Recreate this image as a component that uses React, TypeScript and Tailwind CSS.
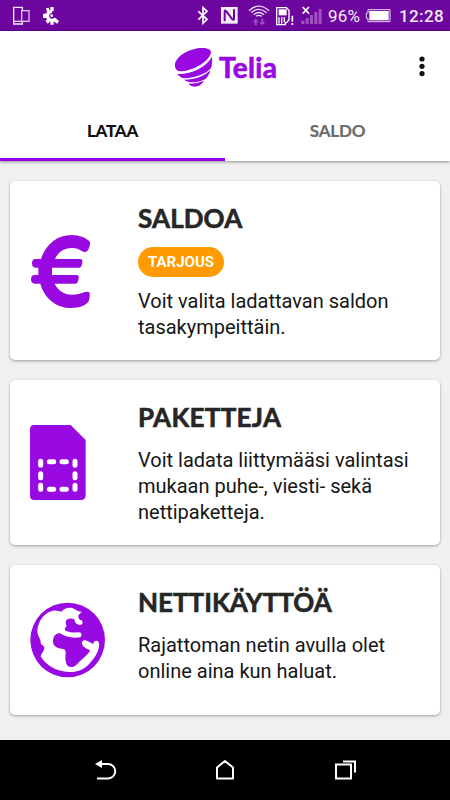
import type { ReactNode } from 'react'

interface OfferCard {
  title: string
  badge?: string
  lines: string[]
  icon: ReactNode
  heightClass: string
  titleClass: string
}

function EuroIcon() {
  return (
    <svg width="100" height="100" viewBox="0 0 300 300" fill="#990ae3">
      <path d="M210 63C200 51 179 42 154 42C111 42 76 72 63 114H46C39 114 36 120 36 127C36 136 40 140 46 140H55V162H43C36 162 33 168 33 175C33 184 37 188 44 188H61C73 231 107 261 154 261C178 261 198 254 206 241C209 233 210 224 209 217C207 211 200 212 192 214C181 218 171 221 156 221C132 221 114 208 104 188H166C173 188 175 181 176 172C177 165 175 162 170 162H96V140H178C184 140 186 133 187 124C188 117 186 114 181 114H105C115 93 132 81 156 81C171 81 181 87 190 92C198 95 203 91 207 81C209 75 211 68 210 63Z" />
    </svg>
  )
}

function SimIcon() {
  return (
    <svg className="mt-[5px]" width="100" height="100" viewBox="0 0 300 300">
      <path d="M42 30H152L197 75V241Q197 255 183 255H43Q30 255 30 242V43Q30 30 42 30Z" fill="#990ae3" />
      <g stroke="#fff" strokeWidth="15" strokeLinecap="round">
        <path d="M62 139V151M62 176V188M62 211V223M165 139V151M165 176V188M165 211V223" />
        <path d="M88 140H101M126 140H139M88 223H101M126 223H139" />
      </g>
    </svg>
  )
}

function GlobeIcon() {
  return (
    <svg width="100" height="100" viewBox="0 0 300 300">
      <circle cx="143" cy="150" r="112" fill="#990ae3" />
      <path
        d="M52 125C52 91 78 64 99 62C111 61 116 64 124 65C132 55 145 51 157 54C166 58 174 66 186 65C181 70 177 72 175 77C175 85 178 90 185 91C190 96 188 105 180 105C168 104 164 96 163 88C157 85 149 84 142 88C134 93 138 102 140 109C134 114 133 118 137 122C147 125 156 129 173 127C185 125 188 136 181 142C168 145 151 143 139 139C130 137 127 132 119 130C106 129 99 142 99 154C99 170 113 176 130 177C140 180 137 192 136 204C137 217 139 229 151 231C166 232 171 222 181 212C194 203 203 193 211 181C203 177 188 172 186 161C184 153 191 149 197 151L220 162C220 152 235 148 237 160C240 178 226 204 208 221C193 239 171 246 147 246C108 245 78 226 62 199C65 189 74 182 73 172C70 165 63 165 62 158C63 146 53 140 52 125Z"
        fill="#fff"
      />
    </svg>
  )
}

const cards: OfferCard[] = [
  {
    title: 'SALDOA',
    badge: 'TARJOUS',
    lines: ['Voit valita ladattavan saldon', 'tasakympeittäin.'],
    icon: <EuroIcon />,
    heightClass: 'h-[179px]',
    titleClass: 'tracking-[0.1px]',
  },
  {
    title: 'PAKETTEJA',
    lines: ['Voit ladata liittymääsi valintasi', 'mukaan puhe-, viesti- sekä', 'nettipaketteja.'],
    icon: <SimIcon />,
    heightClass: 'h-[165px]',
    titleClass: 'tracking-[0.3px]',
  },
  {
    title: 'NETTIKÄYTTÖÄ',
    lines: ['Rajattoman netin avulla olet', 'online aina kun haluat.'],
    icon: <GlobeIcon />,
    heightClass: 'h-[150px]',
    titleClass: 'tracking-[0px]',
  },
]

function StatusBar() {
  return (
    <div className="flex h-[31px] items-center justify-between border-b border-[#5c0490] bg-[#6c069f] text-[#f4eaf8]">
      {/* Notifications */}
      <svg width="64" height="30" viewBox="0 0 192 90" fill="none">
        <path d="M67 30V22H41V72H67V66M41 64H64" stroke="#f3e9f8" strokeWidth="4" />
        <rect x="65" y="32" width="22" height="32" stroke="#dcc0e9" strokeWidth="4" />
        <path d="M156 34A13.5 13.5 0 1 0 167 55" stroke="#fff" strokeWidth="10" />
        <path d="M151 21H161V34H151ZM138 25L146 23L149 34L141 37ZM129 42L138 40V54L129 54ZM136 62L143 58L149 66L143 71ZM151 64H161V74H151ZM165 54L177 63L172 71L162 65Z" fill="#fff" />
        <circle cx="155" cy="47" r="4" fill="#fff" />
      </svg>

      {/* Connectivity, battery and clock */}
      <div className="flex h-[30px] items-center">
        <svg width="136" height="30" viewBox="0 0 408 90" fill="none">
          <path d="M25 34L51 58L39 70V23L51 34L25 59" stroke="#fff" strokeWidth="5" />
          <rect x="93" y="21" width="50" height="50" fill="#f5eef8" />
          <path d="M104 64V35Q104 29 109 34L127 58Q132 62 132 56V28" stroke="#6c069f" strokeWidth="6" />
          <path d="M177 32Q206 5 237 32M184 38Q206 18 230 38M191 44Q206 31 222 44M198 49Q206 43 215 49" stroke="#eadcf2" strokeWidth="4" />
          <path d="M197 56L206 65H200V76H194V65H188ZM217 76L208 67H214V56H220V67H226Z" fill="#9e51c1" />
          <path d="M260 23H289L297 31V59L290 68H286V74H260Z" stroke="#fff" strokeWidth="4" />
          <path d="M266 28H290V46H266Z" fill="#fff" />
          <path d="M267 52V71M275 52V71M283 52V67" stroke="#fff" strokeWidth="4" />
          <path d="M307 47V65M307 69V75" stroke="#fff" strokeWidth="5" />
          <path d="M338 21L357 41M357 21L338 41" stroke="#fff" strokeWidth="5" />
          <path d="M334 62H343V72H334ZM347 54H356V72H347ZM360 45H369V72H360ZM373 36H382V72H373ZM386 27H395V72H386Z" fill="#9e51c1" />
        </svg>
        <span className="w-[36px] whitespace-nowrap pl-[2px] pt-[2px] text-[17px] leading-[28px] tracking-[0.2px]">96%</span>
        <svg className="mr-px" width="36" height="30" viewBox="0 0 108 90" fill="none">
          <path d="M18 29H84V65H18V55H13V39H18Z" stroke="#e5d4ed" strokeWidth="3" />
          <rect x="22" y="33" width="58" height="28" fill="#fff" />
        </svg>
        <span className="w-[51px] whitespace-nowrap pt-[2px] text-[17px] font-medium leading-[28px] tracking-[0.4px]">12:28</span>
      </div>
    </div>
  )
}

function TeliaLogo() {
  return (
    <div className="flex h-[60px] w-[120px] items-center">
      <svg className="shrink-0" width="53" height="60" viewBox="0 0 159 180" fill="#990ae3">
        <path d="M30 86C32 60 75 36 112 36C132 36 141 43 137 54C129 76 88 104 49 106C35 106 29 98 30 86Z" />
        <path d="M141 62C142 75 141 89 138 96C125 113 94 125 56 127C47 124 40 119 37 114C82 115 123 94 141 62Z" />
        <path d="M136 103C134 113 129 121 123 128C111 135 96 139 75 139C67 137 61 134 57 131C91 131 118 121 136 103Z" />
        <path d="M117 134C112 142 105 149 97 151C87 154 77 150 70 143C88 143 104 140 117 134Z" />
      </svg>
      <span className="whitespace-nowrap pl-px pt-px font-['Lato'] text-[28px] font-bold leading-[32px] tracking-[0.3px] text-[#990ae3] [-webkit-text-stroke:0.7px_#990ae3]">
        Telia
      </span>
    </div>
  )
}

function Header() {
  return (
    <header className="relative z-10 h-[130px] bg-white shadow-[0_1px_3px_rgba(0,0,0,0.4)]">
      <div className="flex h-[70px] items-center justify-between pl-[165px] pr-[18px]">
        <TeliaLogo />
        <svg width="20" height="24" viewBox="0 0 20 24" fill="#111">
          <circle cx="10" cy="5" r="2.6" />
          <circle cx="10" cy="12.3" r="2.6" />
          <circle cx="10" cy="19.6" r="2.6" />
        </svg>
      </div>
      <div className="grid h-[60px] grid-cols-2 font-['Lato'] text-[17px] font-bold tracking-[-0.2px]">
        <button className="border-b-[3px] border-[#9500e8] pt-[3px] text-[#0c0c0c] [-webkit-text-stroke:0.2px_#0c0c0c]">LATAA</button>
        <button className="border-b-[3px] border-transparent pt-[3px] text-[#6b6b6b] [-webkit-text-stroke:0.2px_#6b6b6b]">SALDO</button>
      </div>
    </header>
  )
}

function Card({ title, badge, lines, icon, heightClass, titleClass }: OfferCard) {
  return (
    <section className={`flex rounded-[5px] bg-white shadow-[0_1px_3px_rgba(0,0,0,0.35)] ${heightClass}`}>
      <div className="flex w-[128px] shrink-0 items-center pl-[10px]">{icon}</div>
      <div className="pt-[21px]">
        <h2
          className={`whitespace-nowrap font-['Lato'] text-[26px] font-bold leading-[32px] text-[#262626] [-webkit-text-stroke:0.6px_#262626] ${titleClass}`}
        >
          {title}
        </h2>
        {badge && (
          <div className="mt-[13px] flex h-[30px] w-[86px] items-center justify-center rounded-full bg-[#ff9a00] text-[15px] font-bold text-white">
            {badge}
          </div>
        )}
        <p className={`text-[20px] leading-[26px] text-[#161616] ${badge ? 'mt-[11px]' : 'mt-[14px]'}`}>
          {lines.map((line) => (
            <span key={line} className="block whitespace-nowrap">
              {line}
            </span>
          ))}
        </p>
      </div>
    </section>
  )
}

function NavigationBar() {
  return (
    <nav className="flex h-[60px] items-center justify-between bg-black px-[91px]">
      <svg width="28" height="30" viewBox="0 0 28 30" fill="none">
        <path d="M9 9H17A7.2 7.2 0 0 1 17 23.5H6" stroke="#fff" strokeWidth="2" />
        <path d="M4 9L11 5V13Z" fill="#fff" />
      </svg>
      <svg width="28" height="30" viewBox="0 0 28 30" fill="none">
        <path d="M6 12.5L14 6L22 12.5V23.5H6Z" stroke="#fff" strokeWidth="2" strokeLinejoin="round" />
      </svg>
      <svg width="28" height="30" viewBox="0 0 28 30" fill="none" stroke="#fff" strokeWidth="2">
        <path d="M5 9.5H20V23.5H5ZM12 6.5H24V17.5" />
      </svg>
    </nav>
  )
}

export default function App() {
  return (
    <div className="flex h-[800px] w-[450px] flex-col overflow-hidden bg-[#f0f0f0] font-['Roboto',sans-serif]">
      <StatusBar />
      <Header />
      <main className="flex flex-1 flex-col gap-5 px-[10px] pt-5">
        {cards.map((card) => (
          <Card key={card.title} {...card} />
        ))}
      </main>
      <NavigationBar />
    </div>
  )
}
